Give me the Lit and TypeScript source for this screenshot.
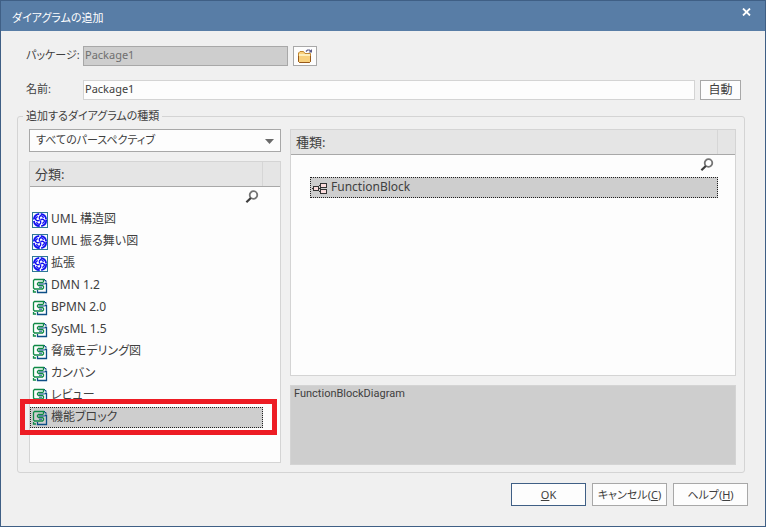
import { LitElement, html, css, svg } from "lit";
import { customElement, state } from "lit/decorators.js";

interface Category {
  name: string;
  kind: "uml" | "mdg";
}

const CATEGORIES: Category[] = [
  { name: "UML 構造図", kind: "uml" },
  { name: "UML 振る舞い図", kind: "uml" },
  { name: "拡張", kind: "uml" },
  { name: "DMN 1.2", kind: "mdg" },
  { name: "BPMN 2.0", kind: "mdg" },
  { name: "SysML 1.5", kind: "mdg" },
  { name: "脅威モデリング図", kind: "mdg" },
  { name: "カンバン", kind: "mdg" },
  { name: "レビュー", kind: "mdg" },
  { name: "機能ブロック", kind: "mdg" },
];

const petal = svg`<path d="M8 7.5C6.8 6.2 7 4.6 8.6 3.6C10.2 3.6 11.2 4.6 11.4 5.8" fill="none" stroke="#1010f0" stroke-width="1.3"/>`;

const umlIcon = html`<svg width="16" height="16" viewBox="0 0 16 16" aria-hidden="true">
  <rect x="0.5" y="0.5" width="15" height="15" fill="#f4fbff" stroke="#2f7896" />
  <circle cx="8" cy="8" r="6.2" fill="#fff" stroke="#1010f0" stroke-width="1.8" stroke-dasharray="8.2 1.54" />
  <g>${petal}</g>
  <g transform="rotate(90 8 8)">${petal}</g>
  <g transform="rotate(180 8 8)">${petal}</g>
  <g transform="rotate(270 8 8)">${petal}</g>
</svg>`;

const mdgIcon = html`<svg width="16" height="16" viewBox="0 0 16 16" aria-hidden="true">
  <path d="M5.5 12V14.5H14.5V5.5H12.5" fill="none" stroke="#0d4f86" stroke-width="1.3" />
  <path d="M12.5 2.5h1.5v2M12 1.5h1" fill="none" stroke="#0d4f86" />
  <path d="M11.5 4V1.5H2.5L1.5 2.5V10L2.5 11H10.5L11.5 10V8.5L10.5 7.5H6.5L5.5 6.5V5.5L6.5 4.5H11.5" fill="none" stroke="#0f8a46" stroke-width="1.3" />
  <path d="M7 6H12.5M7 9.2H10" fill="none" stroke="#0d4f86" />
  <path d="M1.5 12v2h2.5" fill="none" stroke="#0f8a46" stroke-width="1.3" />
</svg>`;

const blockIcon = html`<svg width="16" height="14" viewBox="0 0 16 14" aria-hidden="true">
  <path d="M0 7.5H2M6 7.5H9M8.5 4V11M7 4.5H9M7 10.5H9" fill="none" stroke="#333" />
  <rect x="1.5" y="5.5" width="5" height="4" fill="#fbdcdc" stroke="#333" />
  <rect x="8.5" y="2.5" width="6" height="4" fill="#fbdcdc" stroke="#333" />
  <rect x="8.5" y="8.5" width="6" height="4" fill="#fbdcdc" stroke="#333" />
</svg>`;

const searchIcon = html`<svg width="14" height="14" viewBox="0 0 14 14" aria-hidden="true">
  <circle cx="8.5" cy="5" r="3.8" fill="#fff" stroke="#747474" stroke-width="1.8" />
  <path d="M5.8 8L1.4 12.2" stroke="#3c3c3c" stroke-width="2.2" />
</svg>`;

const folderIcon = html`<svg width="16" height="16" viewBox="0 0 16 16" aria-hidden="true">
  <path d="M1.5 13.5V5L3 3.5H6.5L8 5.5H13.5V13.5L12.5 14.5H2.5Z" fill="#f8d07c" stroke="#c08732" />
  <path d="M2 7H13" stroke="#fdeebb" stroke-width="2" />
  <path d="M1.5 8V13.5L2.5 14.5H12.5L13.5 13.5V8" fill="none" stroke="#97591a" />
  <path d="M9 3.5L10.5 2H12.5L14 3.5" fill="none" stroke="#5a5a85" stroke-width="1.2" />
  <path d="M15 1V4.5H11.5Z" fill="#5a5a85" />
</svg>`;

@customElement("app-root")
export class AppRoot extends LitElement {
  @state() private selected = CATEGORIES.length - 1;

  static styles = css`
    :host {
      display: flex;
      flex-direction: column;
      box-sizing: border-box;
      min-height: 100vh;
      border: 1px solid #3f5f85;
      background: #f0f0f0;
      color: #404040;
      font: 12px/16px "Noto Sans", "Noto Sans CJK JP", sans-serif;
      font-feature-settings: "palt";
    }
    * {
      box-sizing: border-box;
    }
    button,
    input,
    select,
    textarea {
      margin: 0;
      border-radius: 0;
      font: inherit;
      font-feature-settings: inherit;
      color: inherit;
      outline: none;
    }
    svg {
      display: block;
      flex: none;
    }
    .titlebar {
      display: flex;
      justify-content: space-between;
      height: 30px;
      padding: 0 10px 0 11px;
      background: #587da6;
      color: #fff;
    }
    .title {
      margin: 0;
      font-size: 11px;
      font-weight: 400;
      line-height: 34px;
    }
    .close {
      height: 22px;
      padding: 0 4px;
      border: 0;
      background: none;
    }
    .form {
      display: grid;
      grid-template-columns: 57px 1fr;
      row-gap: 14px;
      padding: 15px 24px 8px 25px;
    }
    .label,
    .legend,
    .action {
      font-size: 11px;
    }
    .label {
      line-height: 18px;
    }
    .line {
      display: flex;
      gap: 5px;
      height: 20px;
    }
    .text {
      min-width: 0;
      padding: 0 1px 2px;
      border: 1px solid #d4d4d4;
      background: #fdfdfd;
      font-size: 11px;
      flex: 1;
    }
    .text.locked {
      flex: 0 1 205px;
      border-color: #a8a8a8;
      background: #cecece;
      color: #6e6e6e;
    }
    .btn {
      display: flex;
      align-items: center;
      justify-content: center;
      padding: 0;
      border: 1px solid #a8a8a8;
      background: #fdfdfd;
    }
    .browse {
      width: 24px;
    }
    .auto {
      width: 41px;
    }
    .group {
      flex: 1;
      min-width: 0;
      margin: 0 20px 0 16px;
      padding: 5px 8px 7px 11px;
      border: 1px solid #d4d4d4;
      border-radius: 3px;
    }
    .legend {
      padding: 0 3px;
      margin-left: -6px;
    }
    .columns {
      display: flex;
      gap: 9px;
    }
    .left {
      flex: none;
      width: 252px;
      display: flex;
      flex-direction: column;
      gap: 9px;
      padding-bottom: 2px;
    }
    .right {
      flex: 1;
      min-width: 0;
      display: flex;
      flex-direction: column;
      gap: 9px;
    }
    .combo {
      position: relative;
    }
    .perspective {
      display: block;
      width: 100%;
      height: 23px;
      padding: 0 24px 2px 6px;
      border: 1px solid #a8a8a8;
      background: #fdfdfd;
      font-size: 11px;
      appearance: none;
    }
    .arrow {
      position: absolute;
      right: 7px;
      top: 10px;
      pointer-events: none;
    }
    .panel {
      flex: 1;
      display: flex;
      flex-direction: column;
      padding-bottom: 34px;
      border: 1px solid #d4d4d4;
      background: #fdfdfd;
    }
    .head {
      display: grid;
      grid-template-columns: 1fr 17px;
      height: 25px;
      border-bottom: 1px solid #a8a8a8;
      background: #e5e5e5;
    }
    .head h2 {
      margin: 0;
      padding-left: 5px;
      border-right: 1px solid #d6d6d6;
      font-size: 13px;
      font-weight: 400;
      line-height: 24px;
    }
    .find {
      align-self: flex-end;
      height: 20px;
      margin-right: 21px;
      padding: 0;
      border: 0;
      background: none;
    }
    .items {
      list-style: none;
      margin: 1px 17px 0 0;
      padding: 0;
    }
    .types {
      margin-left: 19px;
    }
    .item {
      position: relative;
      padding-top: 1px;
    }
    .row {
      display: flex;
      align-items: center;
      gap: 3px;
      width: 100%;
      height: 21px;
      padding: 0 2px;
      border: 1px solid transparent;
      border-left-width: 0;
      background: none;
      text-align: left;
    }
    .row.on {
      border: 1px dotted #222;
      padding-left: 1px;
      background: #cecece;
    }
    .caption {
      padding-bottom: 2px;
    }
    .callout::after {
      content: "";
      position: absolute;
      inset: -7px -14px -7px -10px;
      border: 5px solid #ed1c24;
      pointer-events: none;
    }
    .note {
      display: block;
      width: 100%;
      height: 80px;
      padding: 0 3px;
      border: 1px solid #d4d4d4;
      background: #cecece;
      font-family: Roboto, "Noto Sans CJK JP", sans-serif;
      font-size: 11px;
      line-height: 16px;
      resize: none;
    }
    .actions {
      display: flex;
      justify-content: flex-end;
      gap: 6px;
      padding: 10px 17px 20px;
    }
    .action {
      width: 75px;
      height: 23px;
    }
    .primary {
      border-color: #3f5f85;
    }
  `;

  private head(title: string) {
    return html`<div class="head"><h2>${title}</h2></div>
      <button class="find" aria-label="検索">${searchIcon}</button>`;
  }

  render() {
    return html`
      <header class="titlebar">
        <h1 class="title">ダイアグラムの追加</h1>
        <button class="close" aria-label="閉じる">
          <svg width="9" height="8" viewBox="0 0 9 8" aria-hidden="true">
            <path d="M1 0.5L8 7.5M8 0.5L1 7.5" stroke="#fff" stroke-width="1.8" />
          </svg>
        </button>
      </header>
      <div class="form">
        <label class="label" for="package">パッケージ:</label>
        <div class="line">
          <input class="text locked" id="package" value="Package1" disabled />
          <button class="btn browse" aria-label="参照">${folderIcon}</button>
        </div>
        <label class="label" for="name">名前:</label>
        <div class="line">
          <input class="text" id="name" value="Package1" />
          <button class="btn auto">自動</button>
        </div>
      </div>
      <fieldset class="group">
        <legend class="legend">追加するダイアグラムの種類</legend>
        <div class="columns">
          <div class="left">
            <div class="combo">
              <select class="perspective" aria-label="パースペクティブ">
                <option>すべてのパースペクティブ</option>
              </select>
              <svg class="arrow" width="9" height="5" viewBox="0 0 9 5" aria-hidden="true">
                <path d="M0 0H9L4.5 5Z" fill="#6a6a6a" />
              </svg>
            </div>
            <section class="panel">
              ${this.head("分類:")}
              <ul class="items">
                ${CATEGORIES.map(
                  (c, i) => html`<li class="item ${i === this.selected ? "callout" : ""}">
                    <button class="row ${i === this.selected ? "on" : ""}" @click=${() => (this.selected = i)}>
                      ${c.kind === "uml" ? umlIcon : mdgIcon}<span class="caption">${c.name}</span>
                    </button>
                  </li>`
                )}
              </ul>
            </section>
          </div>
          <div class="right">
            <section class="panel">
              ${this.head("種類:")}
              <ul class="items types">
                <li class="item">
                  <button class="row on">${blockIcon}<span class="caption">FunctionBlock</span></button>
                </li>
              </ul>
            </section>
            <textarea class="note" aria-label="説明" readonly .value=${"FunctionBlockDiagram"}></textarea>
          </div>
        </div>
      </fieldset>
      <footer class="actions">
        <button class="btn action primary"><span><u>O</u>K</span></button>
        <button class="btn action"><span>キャンセル(<u>C</u>)</span></button>
        <button class="btn action"><span>ヘルプ(<u>H</u>)</span></button>
      </footer>
    `;
  }
}
